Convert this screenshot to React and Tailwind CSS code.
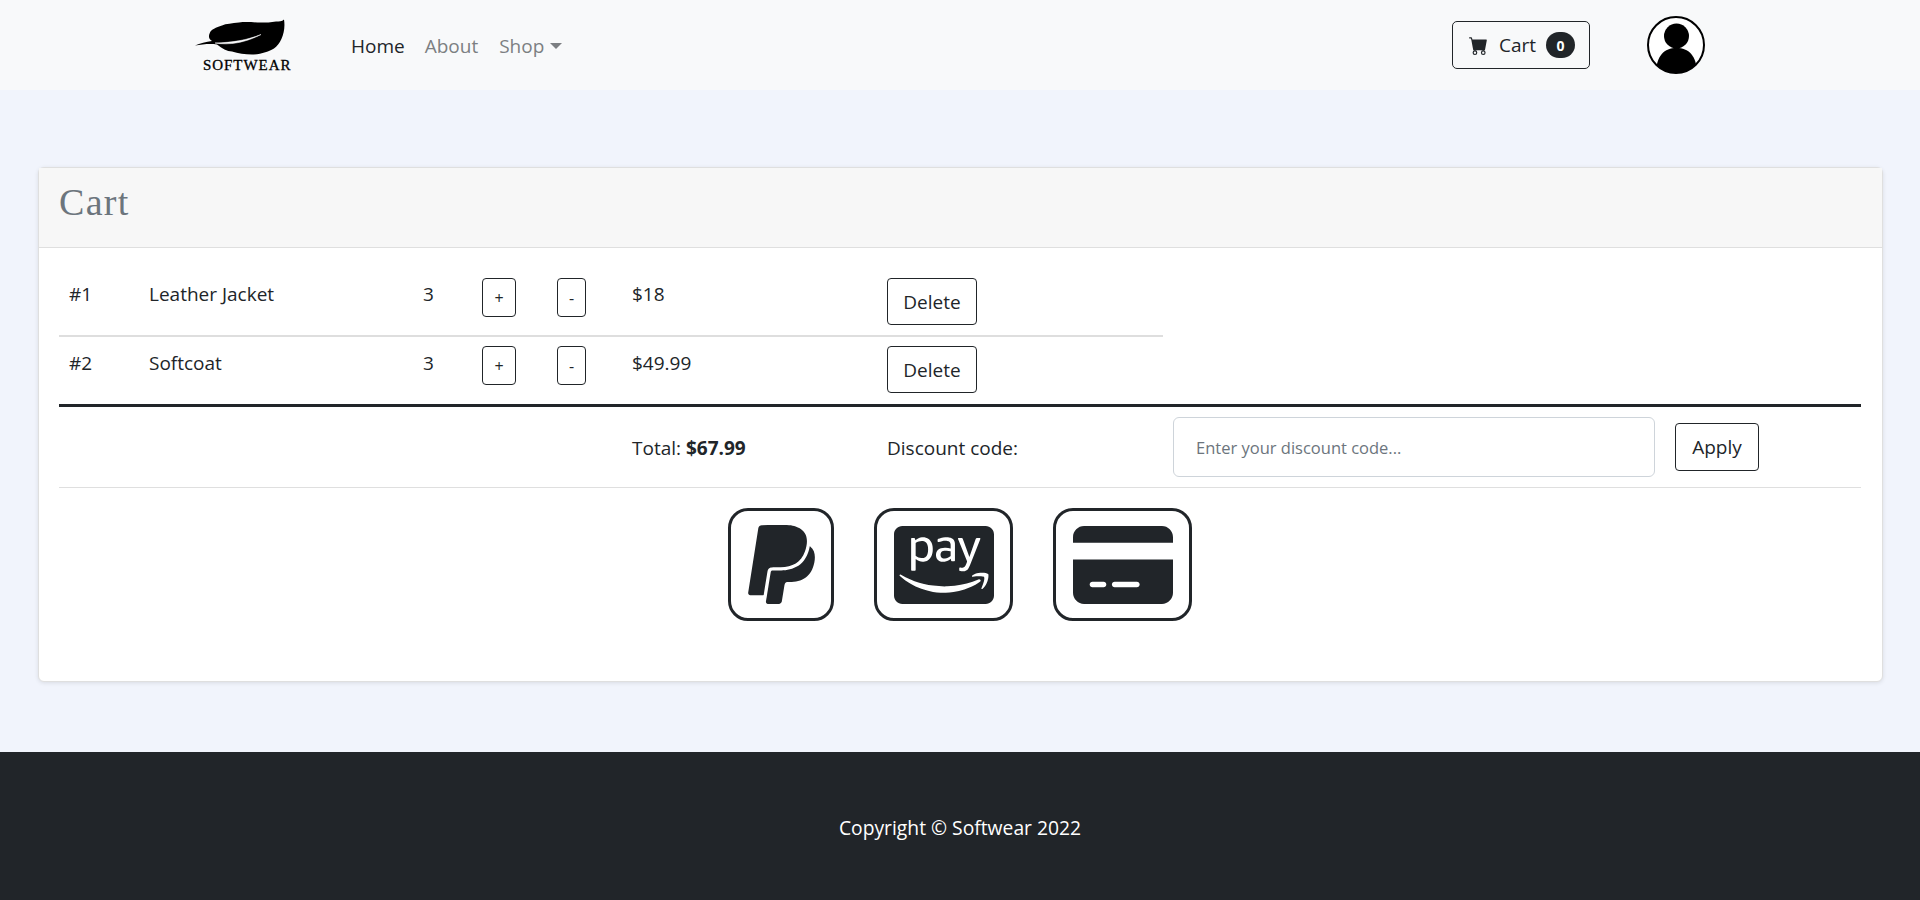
import { BsCartFill } from "react-icons/bs";
import { FaCcAmazonPay, FaPaypal } from "react-icons/fa";
import { FaCreditCard } from "react-icons/fa6";

const items = [
  { id: 1, name: "Leather Jacket", qty: 3, price: "$18" },
  { id: 2, name: "Softcoat", qty: 3, price: "$49.99" },
];

function Logo() {
  return (
    <div className="ml-[-1px] flex flex-col items-start">
      <svg viewBox="0 1 92 37" className="h-[38px] w-[92px]">
        <path
          d="M90 1C88 3 85 3 82 3C77 4 72 4 67 4C60 4 52 3 45 4C38 5 32 5 28 7C22 9 17 11 16 14C14 18 15 21 18 22.500C12 23 6 25 1 27C8 26 16 25 23 26C28 30 33 33 38 33C44 35 51 36 58 36C67 36 75 33 80 30C87 25 92 13 90 1Z"
          fill="#000"
        />
        <path d="M21 24.500C35 27 52 24 67 16C52 22 38 24 21 24.500Z" fill="#f8f9fa" stroke="#f8f9fa" strokeWidth="0.5" />
      </svg>
      <span className="mt-[1px] ml-[9px] font-['Liberation_Serif',serif] text-[15px] leading-[14px] tracking-[0.95px] text-black [-webkit-text-stroke:0.3px_#000]">
        SOFTWEAR
      </span>
    </div>
  );
}

function Avatar() {
  return (
    <svg viewBox="0 0 58 58" className="h-[58px] w-[58px]">
      <clipPath id="avatar-clip">
        <circle cx="29" cy="29" r="28" />
      </clipPath>
      <circle cx="29" cy="29" r="28" fill="#fff" />
      <g clipPath="url(#avatar-clip)">
        <circle cx="29.500" cy="20" r="12.500" fill="#000" />
        <path d="M9 58C9 40 17 32 29.500 32C42 32 50 40 50 58Z" fill="#000" />
      </g>
      <circle cx="29" cy="29" r="28" fill="none" stroke="#000" strokeWidth="2" />
    </svg>
  );
}

function PayBox({ className, children }) {
  return (
    <button className={`flex h-[113px] items-center justify-center rounded-[20px] border-[3px] border-[#212529] bg-white text-[#212529] ${className}`}>
      {children}
    </button>
  );
}

export default function App() {
  return (
    <div className="flex min-h-[900px] flex-col bg-[#f1f4fc] font-['Open_Sans',sans-serif] text-[19px] text-[#212529]">
      <nav className="flex h-[90px] items-center bg-[#f8f9fa]">
        <div className="ml-[195px] w-[156px]">
          <Logo />
        </div>
        <div className="flex items-center gap-[20px] pt-[2px]">
          <a className="text-[#212529]">Home</a>
          <a className="text-[#7c7f82]">About</a>
          <a className="ml-[1px] flex items-center text-[#7c7f82]">
            Shop
            <span className="ml-[6px] h-0 w-0 border-x-[6px] border-t-[6px] border-x-transparent border-t-[#7c7f82]" />
          </a>
        </div>
        <div className="ml-auto flex items-center gap-[57px] pr-[215px]">
          <button className="flex h-[48px] w-[138px] items-center rounded-[5px] border border-[#212529] pl-[16px]">
            <BsCartFill size={19} />
            <span className="ml-[11px]">Cart</span>
            <span className="ml-[10px] flex h-[26px] w-[29px] items-center justify-center rounded-full bg-[#212529] text-[14px] font-bold text-white">
              0
            </span>
          </button>
          <Avatar />
        </div>
      </nav>

      <main className="mt-[77px] mb-[70px] ml-[38px] mr-[37px] flex-1 rounded-[6px] border border-[#dfdfdf] bg-white shadow-[0_1px_4px_rgba(0,0,0,0.1)]">
        <div className="flex h-[80px] items-center border-b border-[#dfdfdf] bg-[#f7f7f7] px-[20px]">
          <h1 className="pb-[10px] font-['Liberation_Serif',serif] text-[38px] tracking-[1.3px] text-[#6c757d]">Cart</h1>
        </div>

        <div className="pl-[20px] pr-[21px] pt-[22px]">
          <table className="w-[1104px] table-fixed border-collapse">
            <colgroup>
              <col className="w-[80px]" />
              <col className="w-[270px]" />
              <col className="w-[63px]" />
              <col className="w-[75px]" />
              <col className="w-[75px]" />
              <col className="w-[255px]" />
              <col />
            </colgroup>
            <tbody>
              {items.map((item, index) => {
                const first = index === 0;
                const textCell = `pl-[10px] align-middle ${first ? "pb-[17px]" : "pb-[15px]"}`;
                const buttonCell = `pl-[10px] align-top ${first ? "pt-[8px]" : "pt-[9px]"}`;
                return (
                  <tr key={item.id} className={first ? "h-[66px] border-b-2 border-[#dedede]" : "h-[68px]"}>
                    <td className={textCell}>#{item.id}</td>
                    <td className={textCell}>{item.name}</td>
                    <td className={`${textCell} !pl-[14px]`}>{item.qty}</td>
                    <td className={buttonCell}>
                      <button className="h-[39px] w-[34px] rounded-[4px] border border-[#212529] text-[16px]">+</button>
                    </td>
                    <td className={buttonCell}>
                      <button className="h-[39px] w-[29px] rounded-[4px] border border-[#212529] text-[16px]">-</button>
                    </td>
                    <td className={textCell}>{item.price}</td>
                    <td className={buttonCell}>
                      <button className="h-[47px] w-[90px] rounded-[4px] border border-[#212529] pt-[1px]">Delete</button>
                    </td>
                  </tr>
                );
              })}
            </tbody>
          </table>

          <div className="flex h-[84px] items-center border-t-[3px] border-b border-t-[#212529] border-b-[#dfdfdf]">
            <div className="w-[573px] shrink-0" />
            <div className="w-[255px] shrink-0 pt-[2px]">
              Total: <strong>$67.99</strong>
            </div>
            <div className="w-[286px] shrink-0 pt-[2px]">Discount code:</div>
            <input
              placeholder="Enter your discount code..."
              className="h-[60px] w-[482px] rounded-[6px] border border-[#ced4da] px-[22px] text-[16.5px] outline-none placeholder:text-[#6c757d]"
            />
            <button className="ml-[20px] h-[48px] w-[84px] rounded-[4px] border border-[#212529]">Apply</button>
          </div>

          <div className="flex justify-center gap-[40px] pt-[20px]">
            <PayBox className="w-[106px]">
              <FaPaypal size={89} />
            </PayBox>
            <PayBox className="w-[139px]">
              <FaCcAmazonPay size={100} />
            </PayBox>
            <PayBox className="w-[139px]">
              <FaCreditCard size={100} />
            </PayBox>
          </div>
        </div>
      </main>

      <footer className="flex h-[148px] items-center justify-center bg-[#212529] pt-[4px] text-[19.3px] text-white">
        Copyright © Softwear 2022
      </footer>
    </div>
  );
}
